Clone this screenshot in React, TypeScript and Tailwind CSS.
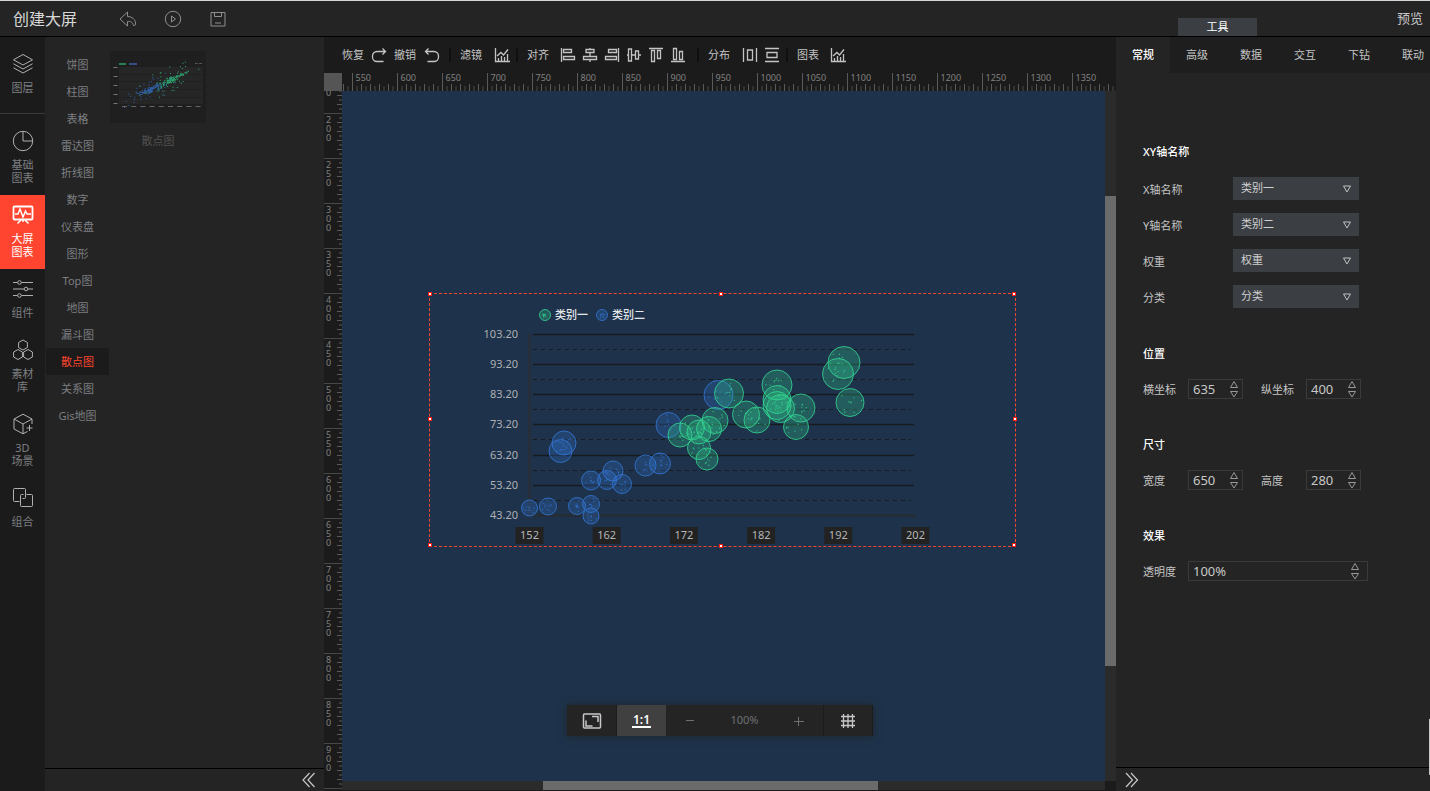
import { useEffect, useRef, useState } from 'react';
import type { ReactNode } from 'react';

function Icon({ size = 16, children }: { size?: number; children: ReactNode }) {
    return (
        <svg
            width={size}
            height={size}
            viewBox={`0 0 ${size} ${size}`}
            fill="none"
            stroke="currentColor"
            aria-hidden="true"
        >
            {children}
        </svg>
    );
}

const hexagon = (cx: number, cy: number) =>
    `M${cx} ${cy - 5}l4.4 2.5v5L${cx} ${cy + 5}l-4.4-2.5v-5z`;

const navItems = [
    {
        label: '图层',
        icon: (
            <path d="M11 1.5 1.5 6.8 11 12l9.5-5.2zM1.5 10.8 11 16l9.5-5.2M1.5 14.8 11 20l9.5-5.2" />
        ),
    },
    {
        label: '基础图表',
        icon: (
            <>
                <circle cx="11" cy="11" r="9.7" />
                <path d="M11 1.3V11h9.7" />
            </>
        ),
    },
    {
        label: '大屏图表',
        icon: (
            <>
                <rect x="1.5" y="2.5" width="19" height="13" rx="1" strokeWidth="1.8" />
                <path d="M3 10h3l2-5 3 8 2.5-6 1.5 3h4M9 16l-3.5 3.5M13 16l3.5 3.5M11 16v2" strokeWidth="1.5" />
            </>
        ),
    },
    {
        label: '组件',
        icon: (
            <>
                <path d="M1 4.5h4.5M9.5 4.5H21M1 11h11M16 11h5M1 17.5h4.5M9.5 17.5H21" />
                <circle cx="7.5" cy="4.5" r="1.8" />
                <circle cx="14" cy="11" r="1.8" />
                <circle cx="7.5" cy="17.5" r="1.8" />
            </>
        ),
    },
    {
        label: '素材库',
        icon: <path d={hexagon(11, 6) + hexagon(6, 15.5) + hexagon(16, 15.5)} />,
    },
    {
        label: '3D 场景',
        icon: (
            <>
                <path d="M20 11V6L11 1.2 2 6v10l9 4.8 4.5-2.4M2 6l9 5 9-5M11 11v9.8" />
                <path d="M17.500 12v6M14.500 15h6" />
            </>
        ),
    },
    {
        label: '组合',
        icon: (
            <>
                <path d="M7.5 14.5h-5a1 1 0 0 1-1-1v-11a1 1 0 0 1 1-1h10a1 1 0 0 1 1 1v8a1 1 0 0 1-1 1h-2" />
                <path d="M14.5 7.5h5a1 1 0 0 1 1 1v10a1 1 0 0 1-1 1h-10a1 1 0 0 1-1-1v-10a1 1 0 0 1 1-1h2" />
            </>
        ),
    },
];

const categories = [
    '饼图',
    '柱图',
    '表格',
    '雷达图',
    '折线图',
    '数字',
    '仪表盘',
    '图形',
    'Top图',
    '地图',
    '漏斗图',
    '散点图',
    '关系图',
    'Gis地图',
];

function Header() {
    return (
        <header className="flex h-[37px] shrink-0 items-stretch border-t border-b border-t-[#d5d8d8] border-b-black bg-[#242424]">
            <h1 className="w-[119px] pl-[13px] text-base leading-9 text-[#d8d8d8]">创建大屏</h1>
            <div className="flex flex-1 items-center gap-[27px] text-[#8e8e8e]">
                <button type="button" aria-label="后退">
                    <Icon size={18}>
                        <path d="M8.5 2 1 9l7.5 7v-4.5c3-.5 5 .5 6 4 2 0 2.500-1 2-2.500C16.5 9.5 13 6.500 8.5 6.500z" />
                    </Icon>
                </button>
                <button type="button" aria-label="播放">
                    <Icon size={18}>
                        <circle cx="9" cy="9" r="7.7" />
                        <path d="M7.500 6v6l4-3z" />
                    </Icon>
                </button>
                <button type="button" aria-label="保存">
                    <Icon size={18}>
                        <path d="M2 2.5h14v13.5H2zM5.5 2.5v4h7v-4M6 13h6" />
                    </Icon>
                </button>
            </div>
            <div className="flex w-[314px] shrink-0 items-end justify-between pr-[7px] pl-[62px]">
                <button type="button" className="h-[18px] w-[79px] bg-[#3b3f44] text-[11px] leading-[18px] text-white">
                    工具
                </button>
                <a href="#preview" className="self-center text-[13px] text-[#c8c8c8]">
                    预览
                </a>
            </div>
        </header>
    );
}

function SideNav() {
    const [active, setActive] = useState('大屏图表');

    const renderItem = ({ label, icon }: (typeof navItems)[number]) => (
        <button
            key={label}
            type="button"
            onClick={() => setActive(label)}
            className={
                active === label
                    ? 'flex w-full flex-col items-center bg-[#ff452f] pt-[9px] pb-[11px] text-white'
                    : 'flex w-full flex-col items-center pt-[9px] pb-[11px] text-[#7d7f82]'
            }
        >
            <span className={active === label ? 'text-white' : 'text-[#b0b0b0]'}>
                <Icon size={22}>{icon}</Icon>
            </span>
            <span className="mt-[6px] w-[24px] text-[11px] leading-[13px]">{label}</span>
        </button>
    );

    return (
        <nav className="w-[45px] shrink-0 bg-[#1b1b1b]">
            <div className="border-b border-[#3a3a3a] pt-[7px] pb-2">{renderItem(navItems[0])}</div>
            <div className="pt-[7px]">{navItems.slice(1).map(renderItem)}</div>
        </nav>
    );
}

// Cheap repeatable noise, so the dots stay put between renders
function noise(seed: number) {
    const v = Math.sin(seed * 12.9898) * 43758.5453;
    return v - Math.floor(v);
}

function Thumbnail() {
    const dots = Array.from({ length: 300 }, (_, i) => {
        const green = i % 2 === 0;
        const far = i % 6 < 2;
        const t = (noise(i + 1) + noise(i * 3.1 + 2.5) + noise(i * 1.7 + 7.2)) / 3 - 0.5;
        const x = (green ? 60 : 39) + t * (far ? 80 : 38);
        const lift = noise(i * 2.3 + 0.3) + noise(i * 4.1 + 0.9) - 1;
        const y = 56 - x * 0.45 + lift * (far ? 16 : 4);
        return { x, y, fill: green ? '#2fa870' : '#3263b0' };
    });

    return (
        <svg width="96" height="72" className="bg-[#1f1f1f]" role="img" aria-label="散点图">
            <rect x="9" y="16" width="84" height="37" fill="#262626" />
            {[23, 30, 38, 46].map((y) => (
                <path key={y} d={`M9 ${y}.5h84`} stroke="#202020" />
            ))}
            <path d="M9 13h7" stroke="#2a7d55" strokeWidth="2" />
            <path d="M19 13h8" stroke="#2f4f85" strokeWidth="2" />
            <path d="M85 12.5h7" stroke="#555" strokeDasharray="3 1" />
            <path d="M5.5 16v38" stroke="#777" strokeWidth="4" strokeDasharray="1 8" />
            <path d="M12 55.5h79" stroke="#666" strokeDasharray="5 4.200" />
            {dots.map((d, i) => (
                <rect key={i} x={d.x} y={d.y} width="1" height="1" fill={d.fill} />
            ))}
            <path d="M67 25.500 79 20" stroke="#2fa870" strokeDasharray="3 1" />
        </svg>
    );
}

function ComponentPanel() {
    const [active, setActive] = useState('散点图');

    return (
        <aside className="flex w-[279px] shrink-0 flex-col bg-[#242424] text-[11px]">
            <div className="flex flex-1 pt-[14px]">
                <ul className="mx-px w-[63px]">
                    {categories.map((name) => (
                        <li key={name}>
                            <button
                                type="button"
                                onClick={() => setActive(name)}
                                className={
                                    active === name
                                        ? 'block h-[27px] w-full bg-[#1b1b1b] pt-px text-center text-[#ff452f]'
                                        : 'block h-[27px] w-full pt-px text-center text-[#7d7f82]'
                                }
                            >
                                {name}
                            </button>
                        </li>
                    ))}
                </ul>
                <figure>
                    <Thumbnail />
                    <figcaption className="mt-[10px] text-center leading-4 text-[#505050]">散点图</figcaption>
                </figure>
            </div>
            <div className="flex h-[23px] items-center justify-end border-t border-black pr-[7px] text-[#c8c8c8]">
                <button type="button" aria-label="收起左侧">
                    <Icon>
                        <path d="M8.5 1 2 8l6.5 7M13.5 1 7 8l6.500 7" strokeWidth="1.200" />
                    </Icon>
                </button>
            </div>
        </aside>
    );
}

const chartIcon = (
    <path d="M1.5 1v13.5H16M4.5 14v-3M7.5 14V9M10.5 14v-4M13.5 14V7M3 9l4-3.5 2.5 2.5L14 2.5" />
);

const alignIcons = [
    { label: '左对齐', path: 'M1.5 1v14M3.5 2.5h8v3h-8zM3.5 9.5h11v3h-11z' },
    { label: '水平居中', path: 'M8 1v1.5M8 5.5v4M8 12.5V15M4 2.5h8v3H4zM1.5 9.5h13v3h-13z' },
    { label: '右对齐', path: 'M14.5 1v14M4.5 2.5h8v3h-8zM1.5 9.5h11v3h-11z' },
    { label: '垂直居中', path: 'M1 8h1.5M5.5 8h4M12.5 8H15M2.5 2v12h3V2zM9.5 4v8h3V4z' },
    { label: '顶对齐', path: 'M1 1.5h14M3.5 3.5v11h3v-11zM9.5 3.5v8h3v-8z' },
    { label: '底对齐', path: 'M1 14.5h14M3.5 1.5v11h3v-11zM9.5 4.5v8h3v-8z' },
];

const spreadIcons = [
    { label: '水平分布', path: 'M1.5 1v14M14.5 1v14M5.5 3h5v10h-5z' },
    { label: '垂直分布', path: 'M1 1.5h14M1 14.5h14M3 5.5h10v5H3z' },
];

function Divider() {
    return <span className="mr-[9px] ml-[3px] h-[14px] w-0.5 shrink-0 bg-[#101010]" />;
}

function ToolButton({ label, children }: { label: string; children: ReactNode }) {
    return (
        <button type="button" aria-label={label} className="flex w-[22px] shrink-0 justify-center">
            <Icon>
                <g strokeWidth="1.300">{children}</g>
            </Icon>
        </button>
    );
}

function Toolbar() {
    return (
        <div className="flex h-9 shrink-0 items-center overflow-hidden pl-[18px] text-[11px] whitespace-nowrap text-[#c4c4c4]">
            <button type="button" className="flex items-center gap-[7px] pr-[7px]">
                恢复
                <Icon>
                    <path
                        d="M14.5 4.5H6A4.500 4.500 0 0 0 1.5 9v1A4.500 4.500 0 0 0 6 14.5h6.500M11.5 1.5l3 3-3 3"
                        strokeWidth="1.300"
                    />
                </Icon>
            </button>
            <button type="button" className="flex items-center gap-2 pr-[6px]">
                撤销
                <Icon>
                    <path
                        d="M1.5 4.5H10A4.500 4.500 0 0 1 14.5 9v1a4.500 4.500 0 0 1-4.500 4.500H3.500M4.500 1.5l-3 3 3 3"
                        strokeWidth="1.300"
                    />
                </Icon>
            </button>
            <Divider />
            <span className="pr-[9px]">滤镜</span>
            <ToolButton label="滤镜">{chartIcon}</ToolButton>
            <Divider />
            <span className="pr-2">对齐</span>
            <div className="flex pr-[5px]">
                {alignIcons.map((item) => (
                    <ToolButton key={item.label} label={item.label}>
                        <path d={item.path} />
                    </ToolButton>
                ))}
            </div>
            <Divider />
            <span className="pr-[9px]">分布</span>
            {spreadIcons.map((item) => (
                <ToolButton key={item.label} label={item.label}>
                    <path d={item.path} />
                </ToolButton>
            ))}
            <Divider />
            <span className="pr-2">图表</span>
            <ToolButton label="图表">{chartIcon}</ToolButton>
        </div>
    );
}

function useBoxSize() {
    const ref = useRef<HTMLDivElement>(null);
    const [size, setSize] = useState({ width: 0, height: 0 });

    useEffect(() => {
        const el = ref.current;
        if (!el) return;
        const measure = () => setSize({ width: el.clientWidth, height: el.clientHeight });
        measure();
        const observer = new ResizeObserver(measure);
        observer.observe(el);
        return () => observer.disconnect();
    }, []);

    return { ref, size };
}

// 45px on the ruler stand for 50 canvas units, cut into ten ticks
const STEP = 45;

function steps(length: number) {
    return Array.from({ length: Math.ceil(length / STEP) + 1 }, (_, i) => i - 1);
}

function HorizontalRuler() {
    const { ref, size } = useBoxSize();

    return (
        <div ref={ref} className="h-[18px] min-w-0 flex-1">
            <svg width={size.width} height="18" className="block" aria-hidden="true">
                {steps(size.width).map((i) => {
                    const x = 10.5 + i * STEP;
                    return (
                        <g key={i}>
                            <path d={`M${x} 0v18`} stroke="#5a5a5a" />
                            {[1, 2, 3, 4].map((n) => (
                                <path key={n} d={`M${x + n * 9} 11v7`} stroke="#5a5a5a" />
                            ))}
                            {[0, 1, 2, 3, 4].map((n) => (
                                <path key={n} d={`M${x + n * 9 + 4.5} 13v5`} stroke="#484848" />
                            ))}
                            {i >= 0 && x + 24 < size.width && (
                                <text x={x + 3} y="8" fontSize="9" fill="#808080">
                                    {550 + i * 50}
                                </text>
                            )}
                        </g>
                    );
                })}
            </svg>
        </div>
    );
}

function VerticalRuler() {
    const { ref, size } = useBoxSize();

    return (
        <div ref={ref} className="w-[18px] shrink-0 overflow-hidden">
            <svg width="18" height={size.height} className="block" aria-hidden="true">
                {steps(size.height).map((i) => {
                    const y = 22.5 + i * STEP;
                    const digits = String(200 + i * 50)
                        .split('')
                        .map((digit, n) => ({ digit, baseline: y + 9 + n * 9 }))
                        .filter(({ baseline }) => baseline > 0 && baseline < size.height);
                    return (
                        <g key={i}>
                            <path d={`M0 ${y}h18`} stroke="#484848" />
                            {[1, 2, 3, 4].map((n) => (
                                <path key={n} d={`M13 ${y + n * 9}h5`} stroke="#5a5a5a" />
                            ))}
                            {[0, 1, 2, 3, 4].map((n) => (
                                <path key={n} d={`M15 ${y + n * 9 + 4.5}h3`} stroke="#5a5a5a" />
                            ))}
                            <text fontSize="9" fill="#808080">
                                {digits.map(({ digit, baseline }) => (
                                    <tspan key={baseline} x="2" y={baseline}>
                                        {digit}
                                    </tspan>
                                ))}
                            </text>
                        </g>
                    );
                })}
            </svg>
        </div>
    );
}

type Bubble = [x: number, y: number, r: number];

const blueBubbles: Bubble[] = [
    [100.5, 215, 8],
    [119, 213.5, 8.5],
    [148, 213, 8.5],
    [162, 211, 8.5],
    [162, 223, 8],
    [162, 187.5, 9.5],
    [178, 187, 9.5],
    [193, 191, 9.5],
    [184, 178, 10],
    [216.5, 172.5, 10.5],
    [231, 170.5, 10.5],
    [131.5, 158, 11.5],
    [135, 150, 12],
    [239.5, 132, 12.5],
    [289.5, 102, 14.5],
];

const greenBubbles: Bubble[] = [
    [251, 142, 12],
    [263, 134.5, 12.5],
    [270, 139, 12],
    [280, 136, 12.5],
    [286, 127.5, 13],
    [270, 155, 11.5],
    [278, 166, 11],
    [300, 100.5, 14.5],
    [317, 121.5, 13.5],
    [328, 127, 13],
    [348, 92, 15],
    [348, 106.5, 14],
    [348, 112.5, 14],
    [351.5, 115.5, 14],
    [372, 115, 14],
    [367, 134, 12.5],
    [415, 69.5, 16],
    [409, 81, 15.5],
    [421, 109.5, 14],
];

function Bubbles({ items, color, seed }: { items: Bubble[]; color: string; seed: number }) {
    return (
        <g>
            {items.map(([x, y, r], i) => (
                <g key={i}>
                    <circle cx={x} cy={y} r={r} fill={color} fillOpacity="0.26" stroke={color} strokeOpacity="0.8" />
                    {Array.from({ length: 9 }, (_, n) => {
                        const angle = noise(seed + i * 11 + n) * Math.PI * 2;
                        const dist = noise(seed + i * 17 + n * 3) * (r - 2);
                        return (
                            <circle
                                key={n}
                                cx={x + Math.cos(angle) * dist}
                                cy={y + Math.sin(angle) * dist}
                                r="0.7"
                                fill={color}
                                fillOpacity="0.7"
                            />
                        );
                    })}
                </g>
            ))}
        </g>
    );
}

const GREEN = '#34d893';
const BLUE = '#3478d8';

function ScatterChart() {
    return (
        <svg width="587" height="254" viewBox="0 0 587 254" fontSize="11" role="img" aria-label="散点图">
            <Bubbles items={[[116, 22, 5.5]]} color={GREEN} seed={3} />
            <Bubbles items={[[173, 22, 5.5]]} color={BLUE} seed={5} />
            <g fill="#e4e7ea" fontWeight="500">
                <text x="126" y="26">
                    类别一
                </text>
                <text x="183" y="26">
                    类别二
                </text>
            </g>

            {[0, 1, 2, 3, 4, 5, 6].map((i) => {
                const y = Math.floor(41 + i * 30.25) + 0.5;
                return (
                    <g key={i}>
                        <path d={`M104 ${y}h381`} stroke="#171b21" strokeWidth="1.300" />
                        {i < 6 && <path d={`M104 ${y + 15}h378`} stroke="#171b21" strokeDasharray="4 4" />}
                        <text x="89" y={y + 3} textAnchor="end" fill="#adafb2">
                            {(103.2 - i * 10).toFixed(2)}
                        </text>
                    </g>
                );
            })}
            <path d="M100.5 41v182M100 222.5h387" stroke="#2a2e34" strokeWidth="2" fill="none" />

            <Bubbles items={blueBubbles} color={BLUE} seed={21} />
            <Bubbles items={greenBubbles} color={GREEN} seed={57} />

            {[152, 162, 172, 182, 192, 202].map((value, i) => {
                const x = 100.5 + i * 77.2;
                return (
                    <g key={value}>
                        <rect x={x - 14} y="234" width="28" height="17" fill="#222" />
                        <text x={x} y="246" textAnchor="middle" fill="#b4b6b8">
                            {value}
                        </text>
                    </g>
                );
            })}
        </svg>
    );
}

const handleSpots = [
    '-left-[2px] -top-[2px]',
    'left-[289px] -top-[2px]',
    '-right-[1px] -top-[2px]',
    '-left-[2px] top-[123px]',
    '-right-[2px] top-[123px]',
    '-left-[2px] -bottom-[1px]',
    'left-[289px] -bottom-[2px]',
    '-right-[1px] -bottom-[1px]',
];

function Canvas() {
    return (
        <div className="relative min-w-0 flex-1 overflow-hidden bg-[#1e334b]">
            <div className="absolute top-[202px] left-[87px]">
                <ScatterChart />
                <div className="absolute inset-0 border border-dashed border-[#ff452f]">
                    {handleSpots.map((spot) => (
                        <span key={spot} className={`absolute size-1 border border-[#ff1a10] bg-white ${spot}`} />
                    ))}
                </div>
            </div>
        </div>
    );
}

function ZoomBar() {
    const [zoom, setZoom] = useState(100);

    return (
        <div className="absolute bottom-[55px] left-1/2 flex h-[31px] w-[306px] -translate-x-1/2 bg-[#242424] text-[#c8c8c8] shadow-[0_0_10px_rgba(34,34,34,0.8)]">
            <button
                type="button"
                aria-label="适应屏幕"
                className="flex w-[50px] items-center justify-center border-r border-[#1b1b1b]"
            >
                <Icon size={20}>
                    <rect x="1.5" y="3" width="17" height="14" rx="1" strokeWidth="1.5" />
                    <path d="M10 5.5h6V11M4 9.5V15h6.5" strokeWidth="1.5" />
                </Icon>
            </button>
            <button
                type="button"
                onClick={() => setZoom(100)}
                className="flex w-[49px] items-center justify-center bg-[#404040] text-white"
            >
                <span className="border-b-2 border-white px-px text-xs leading-3 font-semibold">1:1</span>
            </button>
            <div className="flex flex-1 items-center justify-between px-[17px] text-[#6e7073]">
                <button type="button" aria-label="缩小" onClick={() => setZoom(zoom - 10)}>
                    <Icon size={14}>
                        <path d="M3 6.5h8" />
                    </Icon>
                </button>
                <output className="text-[11px]">{zoom}%</output>
                <button type="button" aria-label="放大" onClick={() => setZoom(zoom + 10)}>
                    <Icon size={14}>
                        <path d="M2 7.5h10M6.5 3v9" />
                    </Icon>
                </button>
            </div>
            <button
                type="button"
                aria-label="网格"
                className="flex w-[50px] items-center justify-center border-x border-[#1b1b1b]"
            >
                <Icon>
                    <path d="M3.5 1v14M8 1v14M12.5 1v14M1 3.5h14M1 8h14M1 12.5h14" strokeWidth="1.300" />
                </Icon>
            </button>
        </div>
    );
}

function Stage() {
    return (
        <main className="relative flex min-w-0 flex-1 flex-col bg-[#1b1b1b]">
            <Toolbar />
            <div className="flex shrink-0">
                <div className="size-[18px] bg-[#555]" />
                <HorizontalRuler />
            </div>
            <div className="flex min-h-0 flex-1">
                <VerticalRuler />
                <div className="flex min-w-0 flex-1 flex-col pb-px">
                    <div className="flex min-h-0 flex-1">
                        <Canvas />
                        <div className="w-[11px] bg-[#2b2b2b] pt-[105px]">
                            <div className="h-[470px] bg-[#6b6b6b]" />
                        </div>
                    </div>
                    <div className="mr-[11px] h-[9px] bg-[#2b2b2b] pl-[201px]">
                        <div className="h-full w-[335px] bg-[#6b6b6b]" />
                    </div>
                </div>
            </div>
            <ZoomBar />
        </main>
    );
}

function SelectField({ id, label, options, value }: { id: string; label: string; options: string[]; value: string }) {
    return (
        <div className="flex h-[23px] items-center">
            <label htmlFor={id} className="w-[90px] pt-[3px]">
                {label}
            </label>
            <div className="relative">
                <select
                    id={id}
                    defaultValue={value}
                    className="block h-[23px] w-[126px] appearance-none bg-[#3b3f44] pl-2 text-[11px] text-[#d0d0d0] outline-none"
                >
                    {options.map((option) => (
                        <option key={option}>{option}</option>
                    ))}
                </select>
                <svg
                    width="10"
                    height="8"
                    className="pointer-events-none absolute top-2 right-[7px]"
                    fill="none"
                    stroke="#c0c0c0"
                    aria-hidden="true"
                >
                    <path d="M1.5 1h7L5 7z" />
                </svg>
            </div>
        </div>
    );
}

function Spinner({ id, label, value, wide }: { id: string; label: string; value: string; wide?: boolean }) {
    return (
        <div className="flex items-center">
            <label htmlFor={id} className="w-[45px] pt-[3px]">
                {label}
            </label>
            <div
                className={
                    wide
                        ? 'flex h-5 w-[180px] border border-[#3a3a3a] pr-[7px]'
                        : 'flex h-5 w-[55px] border border-[#3a3a3a] pr-[3px]'
                }
            >
                <input
                    id={id}
                    type="text"
                    defaultValue={value}
                    className="min-w-0 flex-1 bg-transparent pl-1 text-[13px] leading-[18px] text-[#c8c8c8] outline-none"
                />
                <div className="flex flex-col items-center justify-center text-[#999]">
                    <button type="button" aria-label={`${label}增加`}>
                        <svg width="10" height="9" className="block" fill="none" stroke="currentColor" aria-hidden="true">
                            <path d="M5 1.5 8.5 7.5h-7z" />
                        </svg>
                    </button>
                    <button type="button" aria-label={`${label}减少`}>
                        <svg width="10" height="9" className="block" fill="none" stroke="currentColor" aria-hidden="true">
                            <path d="M5 8 8.5 2.5h-7z" />
                        </svg>
                    </button>
                </div>
            </div>
        </div>
    );
}

function Section({ title, children }: { title: string; children: ReactNode }) {
    return (
        <section>
            <h2 className="mb-[17px] leading-4 font-medium text-white">{title}</h2>
            {children}
        </section>
    );
}

const tabs = ['常规', '高级', '数据', '交互', '下钻', '联动'];

function PropertyPanel() {
    const [tab, setTab] = useState('常规');

    return (
        <aside className="relative flex w-[314px] shrink-0 flex-col overflow-hidden bg-[#242424] text-[11px] text-[#c4c4c4]">
            <div className="flex h-9 shrink-0 bg-[#1e1e1e]">
                {tabs.map((name) => (
                    <button
                        key={name}
                        type="button"
                        onClick={() => setTab(name)}
                        className={
                            tab === name
                                ? 'w-[54px] shrink-0 bg-[#242424] font-medium text-white'
                                : 'w-[54px] shrink-0'
                        }
                    >
                        {name}
                    </button>
                ))}
            </div>
            <form className="flex flex-1 flex-col gap-[38px] pt-[71px] pl-[27px]">
                <Section title="XY轴名称">
                    <div className="flex flex-col gap-[13px]">
                        <SelectField id="x-name" label="X轴名称" options={['类别一', '类别二']} value="类别一" />
                        <SelectField id="y-name" label="Y轴名称" options={['类别一', '类别二']} value="类别二" />
                        <SelectField id="weight" label="权重" options={['权重']} value="权重" />
                        <SelectField id="group" label="分类" options={['分类']} value="分类" />
                    </div>
                </Section>
                <Section title="位置">
                    <div className="flex gap-[18px]">
                        <Spinner id="pos-x" label="横坐标" value="635" />
                        <Spinner id="pos-y" label="纵坐标" value="400" />
                    </div>
                </Section>
                <Section title="尺寸">
                    <div className="flex gap-[18px]">
                        <Spinner id="width" label="宽度" value="650" />
                        <Spinner id="height" label="高度" value="280" />
                    </div>
                </Section>
                <Section title="效果">
                    <Spinner id="opacity" label="透明度" value="100%" wide />
                </Section>
            </form>
            <div className="flex h-6 shrink-0 items-center border-t border-black pl-2 text-[#c8c8c8]">
                <button type="button" aria-label="收起右侧">
                    <Icon>
                        <path d="M2 1l6.500 7L2 15M7 1l6.500 7L7 15" strokeWidth="1.200" />
                    </Icon>
                </button>
            </div>
            {/* edge of the collapsed drawer */}
            <span className="absolute right-0 bottom-4 h-14 w-px bg-[#c8c8c8]" />
        </aside>
    );
}

export default function App() {
    return (
        <div className="flex h-screen flex-col overflow-hidden bg-[#242424] font-['Noto_Sans','Noto_Sans_CJK_SC',sans-serif]">
            <Header />
            <div className="flex min-h-0 flex-1">
                <SideNav />
                <ComponentPanel />
                <Stage />
                <PropertyPanel />
            </div>
        </div>
    );
}
